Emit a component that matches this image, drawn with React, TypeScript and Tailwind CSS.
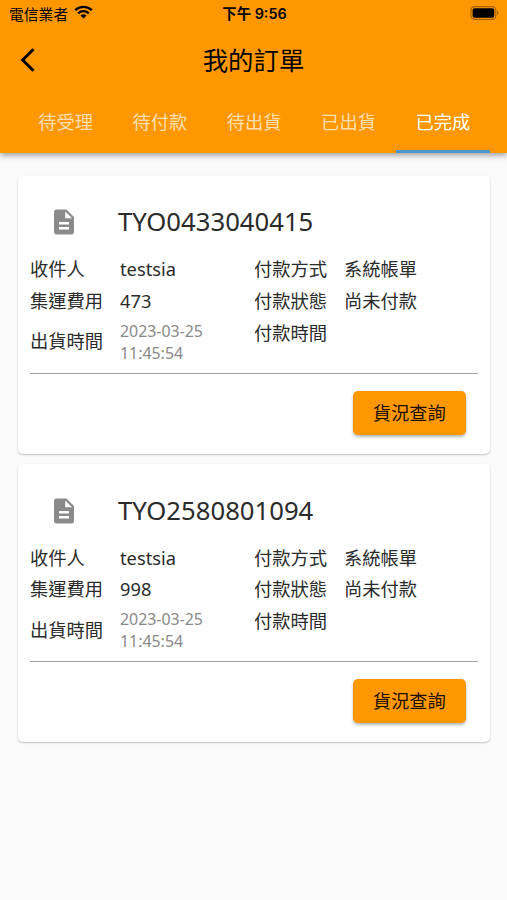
import clsx from "clsx";

const TABS = ["待受理", "待付款", "待出貨", "已出貨", "已完成"];

const ORDERS = [
  {
    id: "TYO0433040415",
    receiver: "testsia",
    fee: 473,
    date: "2023-03-25",
    time: "11:45:54",
    payMethod: "系統帳單",
    payStatus: "尚未付款",
  },
  {
    id: "TYO2580801094",
    receiver: "testsia",
    fee: 998,
    date: "2023-03-25",
    time: "11:45:54",
    payMethod: "系統帳單",
    payStatus: "尚未付款",
  },
];

type Order = (typeof ORDERS)[number];

function StatusBar() {
  return (
    <div className="grid h-7 grid-cols-3 items-center pl-[9px] pr-[7px] text-black">
      <div className="flex items-center gap-[6px]">
        <span className="text-[14.8px] leading-none">電信業者</span>
        <svg
          className="-mt-[3px]"
          width="19"
          height="14"
          viewBox="0 0 19 14"
          fill="none"
        >
          <path
            d="M1.2 5.2a12 12 0 0 1 16.6 0M4.2 8.3a7.6 7.6 0 0 1 10.6 0"
            stroke="#000"
            strokeWidth="2.4"
          />
          <path d="M9.5 13.6 6.5 10.6a4.3 4.3 0 0 1 6 0z" fill="#000" />
        </svg>
      </div>
      <div className="text-center font-['Inter','Noto_Sans_CJK_TC',sans-serif] text-[14.4px] font-semibold leading-none">
        下午 9:56
      </div>
      <svg
        className="-mt-[2px] justify-self-end"
        width="30"
        height="14"
        viewBox="0 0 30 14"
        fill="none"
      >
        <rect
          x="1"
          y="0.7"
          width="24.8"
          height="12.6"
          rx="3.6"
          stroke="#000"
          strokeOpacity="0.35"
          strokeWidth="1.2"
        />
        <rect x="2.6" y="2.3" width="21.6" height="9.4" rx="2" fill="#000" />
        <path d="M27.2 4.8c1.6.5 1.6 3.9 0 4.4z" fill="#000" fillOpacity="0.4" />
      </svg>
    </div>
  );
}

function Field({ label, value }: { label: string; value?: string | number }) {
  return (
    <div className="flex h-[31.8px] items-center">
      <span className="w-[90px] shrink-0">{label}</span>
      <span>{value}</span>
    </div>
  );
}

function OrderCard({ order }: { order: Order }) {
  return (
    <div className="h-[278px] rounded-[5px] bg-white px-3 shadow-[0_1px_2px_rgba(0,0,0,0.24)]">
      <div className="flex h-[77.6px] items-center pt-[15px]">
        <svg
          className="ml-[19px] shrink-0"
          width="30"
          height="30"
          viewBox="0 0 24 24"
          fill="#8a8a8a"
        >
          <path d="M14 2H6c-1.1 0-1.99.9-1.99 2L4 20c0 1.1.89 2 1.99 2H18c1.1 0 2-.9 2-2V8l-6-6zm2 16H8v-2h8v2zm0-4H8v-2h8v2zm-3-5V3.5L18.5 9H13z" />
        </svg>
        <span className="ml-[39px] text-[25.7px] leading-none">{order.id}</span>
      </div>
      <div className="grid grid-cols-2 text-[18.3px] leading-none">
        <div>
          <Field label="收件人" value={order.receiver} />
          <Field label="集運費用" value={order.fee} />
          <div className="flex h-[48.8px] items-center">
            <span className="w-[90px] shrink-0">出貨時間</span>
            <span className="text-[15.9px] leading-[22px] text-[#8a8a8a]">
              {order.date}
              <br />
              {order.time}
            </span>
          </div>
        </div>
        <div>
          <Field label="付款方式" value={order.payMethod} />
          <Field label="付款狀態" value={order.payStatus} />
          <Field label="付款時間" />
        </div>
      </div>
      <div className="mt-[7px] h-px bg-[#a0a0a0]" />
      <div className="flex justify-end pr-[12.5px] pt-[17px]">
        <button className="h-11 w-[112.5px] rounded-[5px] bg-[#ff9800] text-[18.3px] leading-none text-[#1c1000] shadow-[0_2px_3px_rgba(0,0,0,0.28)]">
          貨況查詢
        </button>
      </div>
    </div>
  );
}

export default function App() {
  return (
    <div className="flex h-[900px] w-full flex-col overflow-hidden bg-[#fafafa] font-['Noto_Sans','Noto_Sans_CJK_TC',sans-serif] text-[#2b2b2b]">
      <header className="h-[152.5px] shrink-0 bg-[#ff9800] shadow-[0_2px_6px_rgba(0,0,0,0.4)]">
        <StatusBar />
        <div className="grid h-16 grid-cols-[1fr_auto_1fr] items-center text-black">
          <svg
            className="ml-5"
            width="16"
            height="24"
            viewBox="0 0 16 24"
            fill="none"
            stroke="#000"
            strokeWidth="3"
          >
            <path d="M13.5 1.2 2.7 12l10.8 10.8" />
          </svg>
          <h1 className="pt-[2px] text-[25.4px] leading-none">我的訂單</h1>
        </div>
        <nav className="flex h-[60.5px] pl-[18.5px] pr-[17px]">
          {TABS.map((tab) => (
            <div
              key={tab}
              className={clsx(
                "flex flex-1 items-center justify-center border-b-[3px] pt-[3px] text-[18.3px] leading-none",
                tab === "已完成"
                  ? "border-[#4a98cb] text-white"
                  : "border-transparent text-white/70",
              )}
            >
              {tab}
            </div>
          ))}
        </nav>
      </header>
      <main className="flex flex-col gap-[10.3px] pl-[18px] pr-[17px] pt-[23.5px]">
        {ORDERS.map((order) => (
          <OrderCard key={order.id} order={order} />
        ))}
      </main>
    </div>
  );
}
